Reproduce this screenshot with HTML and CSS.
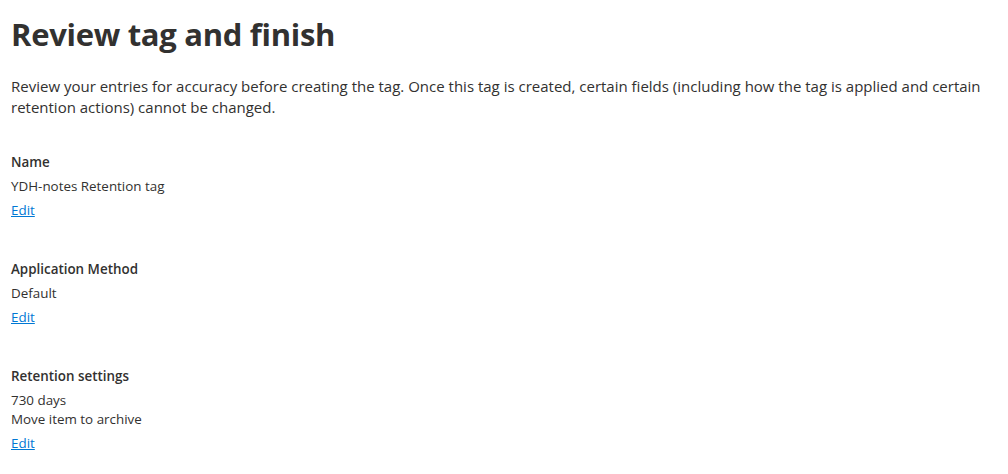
FILE: index.html
```html
<!DOCTYPE html>
<html lang="en">
<head>
<meta charset="utf-8">
<title>Review tag and finish</title>
<link rel="stylesheet" href="styles.css">
</head>
<body>
<main class="page">
  <h1 class="title">Review tag and finish</h1>
  <p class="intro">Review your entries for accuracy before creating the tag. Once this tag is created, certain fields (including how the tag is applied and certain retention actions) cannot be changed.</p>

  <section class="field">
    <div class="label">Name</div>
    <div class="value">YDH-notes Retention tag</div>
    <a class="edit" href="#">Edit</a>
  </section>

  <section class="field">
    <div class="label">Application Method</div>
    <div class="value">Default</div>
    <a class="edit" href="#">Edit</a>
  </section>

  <section class="field">
    <div class="label">Retention settings</div>
    <div class="value">730 days</div>
    <div class="value">Move item to archive</div>
    <a class="edit" href="#">Edit</a>
  </section>
</main>
</body>
</html>
```

FILE: styles.css
```css
html, body {
  margin: 0;
  padding: 0;
  background: #ffffff;
}

body {
  font-family: "Open Sans", "Noto Sans", "Liberation Sans", sans-serif;
  color: #323130;
}

.page {
  padding: 12px 10px 0 11px;
}

.title {
  margin: 0;
  font-size: 31px;
  font-weight: 700;
  line-height: 44px;
  letter-spacing: -0.3px;
}

.intro {
  margin: 20px 0 35px;
  font-size: 15px;
  line-height: 21px;
}

.field {
  display: flex;
  flex-direction: column;
  align-items: flex-start;
  margin-bottom: 40px;
  font-size: 13.4px;
  line-height: 19px;
}

.label {
  font-weight: 600;
  margin-bottom: 5px;
}

.edit {
  margin-top: 5px;
  color: #0078d4;
  text-decoration: underline;
}
```
